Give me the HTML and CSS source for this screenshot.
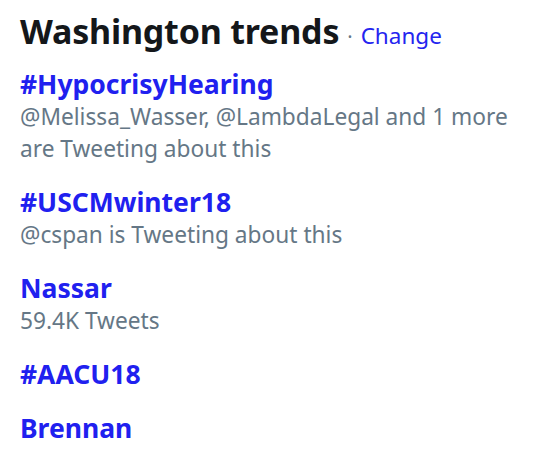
FILE: index.html
```html
<!DOCTYPE html>
<html>
<head>
<meta charset="utf-8">
<link rel="stylesheet" href="styles.css">
</head>
<body>
<div class="trends">
  <div class="header">
    <h2 class="title">Washington trends</h2>
    <span class="dot">·</span>
    <a class="change">Change</a>
  </div>
  <ul class="list">
    <li class="item">
      <div class="name">#HypocrisyHearing</div>
      <div class="meta">@Melissa_Wasser, @LambdaLegal and 1 more are Tweeting about this</div>
    </li>
    <li class="item">
      <div class="name">#USCMwinter18</div>
      <div class="meta">@cspan is Tweeting about this</div>
    </li>
    <li class="item">
      <div class="name">Nassar</div>
      <div class="meta">59.4K Tweets</div>
    </li>
    <li class="item">
      <div class="name">#AACU18</div>
    </li>
    <li class="item">
      <div class="name">Brennan</div>
    </li>
  </ul>
</div>
</body>
</html>
```

FILE: styles.css
```css
* { box-sizing: border-box; }
body {
  margin: 0;
  background: #fff;
  font-family: "Noto Sans", "Open Sans", sans-serif;
}
.trends {
  padding: 11px 20px 0 20px;
  width: 539px;
}
.header {
  display: flex;
  align-items: baseline;
  gap: 8px;
}
.title {
  margin: 0;
  font-size: 34px;
  font-weight: 700;
  color: #14171a;
  line-height: 40px;
  letter-spacing: -0.2px;
}
.dot {
  font-size: 20px;
  color: #657786;
}
.change {
  font-size: 22.5px;
  color: #2424ef;
}
.list {
  list-style: none;
  margin: 16px 0 0 0;
  padding: 0;
  display: flex;
  flex-direction: column;
  gap: 20px;
}
.name {
  font-size: 26.5px;
  font-weight: 700;
  color: #2020ef;
  line-height: 34px;
}
.meta {
  font-size: 22.7px;
  color: #657786;
  line-height: 32px;
  max-width: 499px;
}
```
